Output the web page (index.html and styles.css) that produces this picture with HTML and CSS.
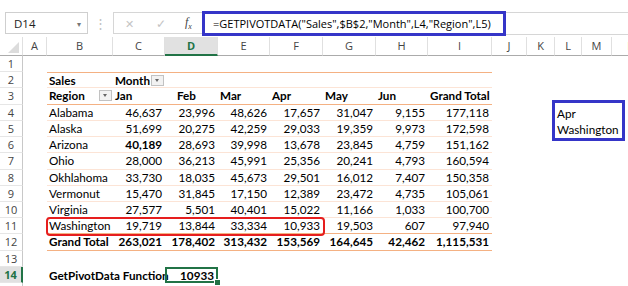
FILE: index.html
```html
<!DOCTYPE html>
<html lang="en">
<head>
    <meta charset="UTF-8">
    <title>GetPivotData</title>
    <link rel="stylesheet" href="styles.css">
</head>
<body>
<div class="app">
    <div class="formula-bar">
        <div class="name-box"><span>D14</span><span class="nb-arrow">&#9662;</span></div>
        <div class="dots">&#8942;</div>
        <div class="fx-box">
            <span class="fx-cancel">&#10005;</span>
            <span class="fx-ok">&#10003;</span>
            <span class="fx-label">f<sub>x</sub></span>
        </div>
        <div class="formula">
            <div class="formula-mark">=GETPIVOTDATA("Sales",$B$2,"Month",L4,"Region",L5)</div>
        </div>
    </div>

    <table class="sheet">
        <tr class="col-heads">
            <th class="corner"><span class="corner-tri"></span></th>
            <th>A</th><th>B</th><th>C</th><th class="sel">D</th><th>E</th><th>F</th><th>G</th>
            <th>H</th><th>I</th><th>J</th><th>K</th><th>L</th><th>M</th><th>N</th>
        </tr>
        <tr>
            <td class="rh">1</td><td></td><td></td><td></td><td></td><td></td><td></td><td></td>
            <td></td><td></td><td></td><td></td><td></td><td></td><td></td>
        </tr>
        <tr class="pv-first">
            <td class="rh">2</td><td></td>
            <td class="pv b">Sales</td>
            <td class="pv b"><div class="hd"><span>Month</span><span class="drop"></span></div></td>
            <td class="pv"></td><td class="pv"></td><td class="pv"></td><td class="pv"></td><td class="pv"></td><td class="pv"></td>
            <td></td><td></td><td></td><td></td><td></td>
        </tr>
        <tr class="pv-head">
            <td class="rh">3</td><td></td>
            <td class="pv b"><div class="hd"><span>Region</span><span class="drop"></span></div></td>
            <td class="pv b">Jan</td><td class="pv b feb">Feb</td><td class="pv b">Mar</td><td class="pv b">Apr</td>
            <td class="pv b">May</td><td class="pv b">Jun</td><td class="pv b">Grand Total</td>
            <td></td><td></td><td></td><td></td><td></td>
        </tr>
        <tr class="pv-row">
            <td class="rh">4</td><td></td>
            <td class="pv">Alabama</td><td class="pv n">46,637</td><td class="pv n">23,996</td><td class="pv n">48,626</td>
            <td class="pv n">17,657</td><td class="pv n">31,047</td><td class="pv n">9,155</td><td class="pv n">177,118</td>
            <td></td><td></td><td class="note">Apr</td><td></td><td></td>
        </tr>
        <tr class="pv-row">
            <td class="rh">5</td><td></td>
            <td class="pv">Alaska</td><td class="pv n">51,699</td><td class="pv n">20,275</td><td class="pv n">42,259</td>
            <td class="pv n">29,033</td><td class="pv n">19,359</td><td class="pv n">9,973</td><td class="pv n">172,598</td>
            <td></td><td></td><td class="note">Washington</td><td></td><td></td>
        </tr>
        <tr class="pv-row">
            <td class="rh">6</td><td></td>
            <td class="pv">Arizona</td><td class="pv n b">40,189</td><td class="pv n">28,693</td><td class="pv n">39,998</td>
            <td class="pv n">13,678</td><td class="pv n">23,845</td><td class="pv n">4,759</td><td class="pv n">151,162</td>
            <td></td><td></td><td></td><td></td><td></td>
        </tr>
        <tr class="pv-row">
            <td class="rh">7</td><td></td>
            <td class="pv">Ohio</td><td class="pv n">28,000</td><td class="pv n">36,213</td><td class="pv n">45,991</td>
            <td class="pv n">25,356</td><td class="pv n">20,241</td><td class="pv n">4,793</td><td class="pv n">160,594</td>
            <td></td><td></td><td></td><td></td><td></td>
        </tr>
        <tr class="pv-row">
            <td class="rh">8</td><td></td>
            <td class="pv">Okhlahoma</td><td class="pv n">33,730</td><td class="pv n">18,035</td><td class="pv n">45,673</td>
            <td class="pv n">29,501</td><td class="pv n">16,012</td><td class="pv n">7,407</td><td class="pv n">150,358</td>
            <td></td><td></td><td></td><td></td><td></td>
        </tr>
        <tr class="pv-row">
            <td class="rh">9</td><td></td>
            <td class="pv">Vermonut</td><td class="pv n">15,470</td><td class="pv n">31,845</td><td class="pv n">17,150</td>
            <td class="pv n">12,389</td><td class="pv n">23,472</td><td class="pv n">4,735</td><td class="pv n">105,061</td>
            <td></td><td></td><td></td><td></td><td></td>
        </tr>
        <tr class="pv-row">
            <td class="rh">10</td><td></td>
            <td class="pv">Virginia</td><td class="pv n">27,577</td><td class="pv n">5,501</td><td class="pv n">40,401</td>
            <td class="pv n">15,022</td><td class="pv n">11,166</td><td class="pv n">1,033</td><td class="pv n">100,700</td>
            <td></td><td></td><td></td><td></td><td></td>
        </tr>
        <tr class="pv-last">
            <td class="rh">11</td><td></td>
            <td class="pv">Washington</td><td class="pv n">19,719</td><td class="pv n">13,844</td><td class="pv n">33,334</td>
            <td class="pv n">10,933</td><td class="pv n">19,503</td><td class="pv n">607</td><td class="pv n">97,940</td>
            <td></td><td></td><td></td><td></td><td></td>
        </tr>
        <tr class="pv-total">
            <td class="rh">12</td><td></td>
            <td class="pv b">Grand Total</td><td class="pv n b">263,021</td><td class="pv n b">178,402</td><td class="pv n b">313,432</td>
            <td class="pv n b">153,569</td><td class="pv n b">164,645</td><td class="pv n b">42,462</td><td class="pv n b">1,115,531</td>
            <td></td><td></td><td></td><td></td><td></td>
        </tr>
        <tr>
            <td class="rh">13</td><td></td><td></td><td></td><td></td><td></td><td></td><td></td>
            <td></td><td></td><td></td><td></td><td></td><td></td><td></td>
        </tr>
        <tr>
            <td class="rh sel">14</td><td></td>
            <td class="b">GetPivotData Function</td><td></td>
            <td class="n b active">10933<span class="handle"></span></td>
            <td></td><td></td><td></td><td></td><td></td><td></td><td></td><td></td><td></td><td></td>
        </tr>
        <tr>
            <td class="rh">15</td><td></td><td></td><td></td><td></td><td></td><td></td><td></td>
            <td></td><td></td><td></td><td></td><td></td><td></td><td></td>
        </tr>
    </table>

    <div class="mark-row"></div>
    <div class="mark-note"></div>
</div>
</body>
</html>
```

FILE: styles.css
```css
body {
    margin: 0;
    padding: 0;
    background-color: #fff;
    overflow: hidden;
    font-family: "Open Sans", "Noto Sans", sans-serif;
}
.app {
    position: relative;
    width: 628px;
    height: 286px;
    overflow: hidden;
}

/* formula bar */
.formula-bar {
    display: flex;
    align-items: flex-start;
    height: 37px;
    padding: 10px 0 0 5px;
    box-sizing: border-box;
    font-size: 11px;
    color: #333;
}
.name-box {
    display: flex;
    align-items: center;
    justify-content: space-between;
    width: 83px;
    height: 22px;
    margin-top: 2px;
    padding: 0 6px 0 8px;
    box-sizing: border-box;
    border: 1px solid #cfcfcf;
    font-size: 11.5px;
    color: #222;
}
.nb-arrow {
    font-size: 8px;
    color: #777;
}
.dots {
    width: 25px;
    margin-top: 4px;
    text-align: center;
    color: #c0c0c0;
    font-size: 13px;
}
.fx-box {
    display: flex;
    align-items: center;
    width: 90px;
    height: 22px;
    margin-top: 2px;
    box-sizing: border-box;
    border: 1px solid #d6d6d6;
    border-right: none;
}
.fx-cancel {
    margin-left: 11px;
    color: #c4c4c4;
    font-size: 11px;
}
.fx-ok {
    margin-left: 22px;
    color: #c4c4c4;
    font-size: 12px;
}
.fx-label {
    margin-left: 19px;
    font-family: "Liberation Serif", serif;
    font-style: italic;
    font-size: 12px;
    color: #444;
}
.fx-label sub {
    font-size: 8px;
}
.formula {
    flex: 1;
    display: flex;
    align-items: center;
    height: 21px;
    margin-top: 2px;
    margin-left: -1px;
    border-top: 1px solid #d6d6d6;
    border-bottom: 1px solid #d6d6d6;
    border-left: 1px solid #d6d6d6;
}
.formula-mark {
    width: 304px;
    height: 25px;
    margin-left: -1px;
    padding-left: 8px;
    box-sizing: border-box;
    border: 3px solid #3535c8;
    line-height: 19px;
    font-size: 11px;
    color: #000;
    white-space: nowrap;
}

/* sheet grid */
.sheet {
    display: grid;
    grid-template-columns: 23px 24px 66px 52px 53px 52px 53px 53px 52px 64px 35px 28px 27px 30px 40px;
    grid-template-rows: 19px;
    grid-auto-rows: 16.23px;
    width: 652px;
    border-spacing: 0;
    font-family: "Lato", "Liberation Sans", sans-serif;
    font-size: 11.7px;
    color: #000;
}
.sheet tbody,
.sheet tr {
    display: contents;
}
.sheet td,
.sheet th {
    display: block;
    padding: 0 3px 0 2px;
    line-height: 16px;
    white-space: nowrap;
    overflow: visible;
    text-align: left;
    box-sizing: border-box;
}
.col-heads th {
    padding: 0;
    line-height: 18px;
    text-align: center;
    font-family: "Open Sans", sans-serif;
    font-weight: normal;
    font-size: 11px;
    color: #444;
    border-right: 1px solid #e0e0e0;
    border-bottom: 1px solid #ababab;
}
.col-heads th.sel {
    background-color: #e1e1e1;
    color: #217346;
    font-weight: bold;
    line-height: 17px;
    border-bottom: 2px solid #217346;
}
.corner-tri {
    display: block;
    width: 0;
    height: 0;
    margin: 5px 0 0 8px;
    border-left: 11px solid transparent;
    border-bottom: 11px solid #dcdcdc;
}
.sheet td.rh {
    padding: 0;
    line-height: 15px;
    text-align: center;
    font-family: "Open Sans", sans-serif;
    font-size: 11px;
    color: #444;
    border-right: 1px solid #c8c8c8;
    border-bottom: 1px solid #e6e6e6;
}
.sheet td.rh.sel {
    background-color: #e1e1e1;
    color: #217346;
    font-weight: bold;
    border-right: 2px solid #217346;
}

/* pivot table */
.b {
    font-weight: bold;
}
.sheet td.n {
    text-align: right;
}
.sheet td.feb {
    padding-left: 12px;
}
.hd {
    display: flex;
    align-items: center;
    justify-content: space-between;
}
.drop {
    display: inline-block;
    position: relative;
    width: 13px;
    height: 11px;
    margin-right: -2px;
    box-sizing: border-box;
    border: 1px solid #c2c2c2;
    background-color: #f2f2f2;
}
.drop::after {
    content: "";
    position: absolute;
    left: 3px;
    top: 3px;
    border-left: 2.5px solid transparent;
    border-right: 2.5px solid transparent;
    border-top: 3px solid #666;
}
.sheet td.pv {
    line-height: 15px;
    border-bottom: 1px solid #fce4d6;
}
.pv-first .pv {
    border-top: 1px solid #f4b183;
}
.sheet .pv-first td.pv {
    line-height: 14px;
}
.pv-head .pv,
.pv-last .pv,
.pv-total .pv {
    border-bottom-color: #f4b183 !important;
}
.sheet td.active {
    position: relative;
    padding-right: 4px;
    box-shadow: inset 0 0 0 2px #217346;
}
.handle {
    position: absolute;
    right: -3px;
    bottom: -3px;
    width: 5px;
    height: 5px;
    background-color: #217346;
    border: 1px solid #fff;
}

/* annotation boxes */
.mark-row {
    position: absolute;
    left: 46px;
    top: 217px;
    width: 279px;
    height: 19px;
    box-sizing: border-box;
    border: 2px solid #e61e1e;
    border-radius: 4px;
}
.mark-note {
    position: absolute;
    left: 552px;
    top: 100px;
    width: 73px;
    height: 41px;
    box-sizing: border-box;
    border: 3px solid #3535c8;
}
```
